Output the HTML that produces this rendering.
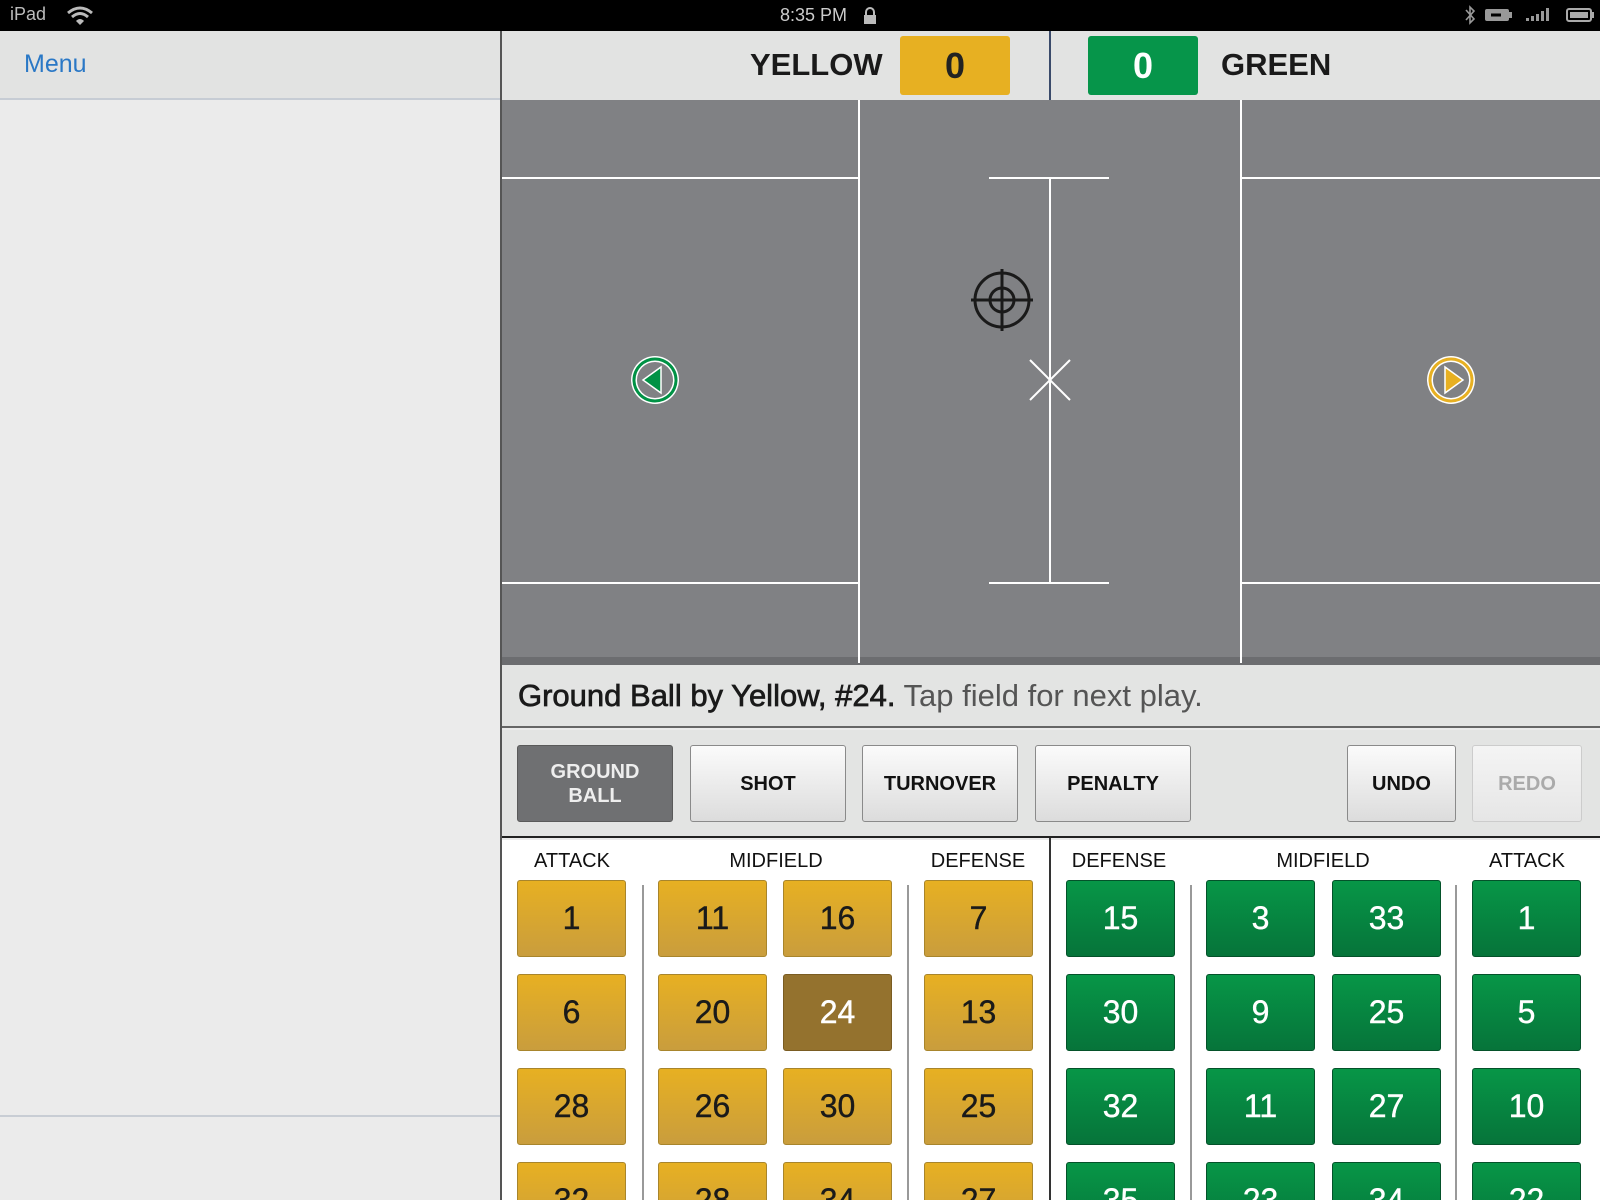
<!DOCTYPE html>
<html style="overflow:hidden;width:1600px;height:1200px"><head><meta charset="utf-8"><style>
*{margin:0;padding:0;box-sizing:border-box}
body{width:1600px;height:1200px;overflow:hidden;background:#ebebeb;font-family:"Liberation Sans",Arial,sans-serif;position:relative}
#w{position:absolute;left:0;top:0;width:1600px;height:1200px;overflow:hidden}
.a{position:absolute}
.sb{left:0;top:0;width:1600px;height:31px;background:#000;color:#bbb;font-size:18px}
.btn{position:absolute;top:745px;height:77px;border:1px solid #8a8a8a;border-radius:3px;background:linear-gradient(#fbfbfb,#dcdcdc);display:flex;align-items:center;justify-content:center;text-align:center;font-weight:bold;font-size:20px;color:#111;line-height:24px}
.n{position:absolute;width:109px;height:77px;border-radius:3px;display:flex;align-items:center;justify-content:center;font-size:32px;-webkit-text-stroke:0.4px}
.y{background:linear-gradient(#e7b022,#c99d3d);border:1px solid #a8852c;color:#1a1a1a}
.g{background:linear-gradient(#079647,#06743a);border:1px solid #04522a;color:#fff}
.s{background:#94722e;border:1px solid #7a5c22;color:#fff}
.h{position:absolute;top:850px;font-size:20px;color:#111;transform:translateX(-50%);white-space:nowrap}
.vl{position:absolute;top:885px;width:2px;height:315px;background:#999}
</style></head><body><div id="w">
<div class="a sb">
<span class="a" style="left:10px;top:4px">iPad</span>
<svg class="a" style="left:66px;top:6px" width="28" height="20" viewBox="0 0 28 20"><path d="M2 7 Q14 -3 26 7" stroke="#bbb" stroke-width="3" fill="none"/><path d="M6 11 Q14 4 22 11" stroke="#bbb" stroke-width="3" fill="none"/><path d="M10 15 Q14 11 18 15 L14 19Z" fill="#bbb"/></svg>
<span class="a" style="left:780px;top:5px;color:#ccc">8:35 PM</span>
<svg class="a" style="left:863px;top:7px" width="14" height="18"><path d="M3 8 V5 a4 4 0 0 1 8 0 V8" stroke="#bbb" stroke-width="2" fill="none"/><rect x="1" y="8" width="12" height="9" fill="#bbb"/></svg>
<svg class="a" style="left:1463px;top:5px" width="14" height="20"><path d="M3 5 L11 14 L7 18 V2 L11 6 L3 15" stroke="#999" stroke-width="1.6" fill="none"/></svg>
<svg class="a" style="left:1484px;top:8px" width="30" height="15"><rect x="1" y="1" width="24" height="12" rx="2" fill="#999"/><rect x="25" y="4" width="3" height="6" fill="#999"/><path d="M7 7 h10" stroke="#000" stroke-width="3"/></svg>
<svg class="a" style="left:1526px;top:8px" width="28" height="14"><rect x="0" y="10" width="3" height="3" fill="#999"/><rect x="5" y="8" width="3" height="5" fill="#999"/><rect x="10" y="6" width="3" height="7" fill="#999"/><rect x="15" y="3" width="3" height="10" fill="#999"/><rect x="20" y="0" width="3" height="13" fill="#999"/></svg>
<svg class="a" style="left:1566px;top:8px" width="30" height="15"><rect x="1" y="1" width="24" height="12" rx="2" fill="none" stroke="#aaa" stroke-width="2"/><rect x="4" y="4" width="18" height="6" fill="#aaa"/><rect x="26" y="4" width="2" height="6" fill="#aaa"/></svg>
</div>
<div class="a" style="left:0;top:31px;width:500px;height:69px;background:#e2e3e2;border-bottom:2px solid #c6ccd4"></div>
<span class="a" style="left:24px;top:50px;font-size:25px;color:#2a78c6">Menu</span>
<div class="a" style="left:0;top:1115px;width:500px;height:2px;background:#c8cdd4"></div>
<div class="a" style="left:500px;top:31px;width:2px;height:1169px;background:#555"></div>
<div class="a" style="left:502px;top:31px;width:1098px;height:69px;background:#e2e3e2"></div>
<span class="a" style="left:750px;top:47px;font-size:31px;font-weight:bold;color:#1a1a1a">YELLOW</span>
<div class="a" style="left:900px;top:36px;width:110px;height:59px;background:#e7b022;border-radius:3px;font-size:36px;font-weight:bold;color:#222;text-align:center;line-height:59px">0</div>
<div class="a" style="left:1049px;top:31px;width:2px;height:69px;background:#3a4a6a"></div>
<div class="a" style="left:1088px;top:36px;width:110px;height:59px;background:#06954a;border-radius:3px;font-size:36px;font-weight:bold;color:#fff;text-align:center;line-height:59px">0</div>
<span class="a" style="left:1221px;top:47px;font-size:31px;font-weight:bold;color:#1a1a1a">GREEN</span>
<svg class="a" style="left:502px;top:100px" width="1098" height="565" viewBox="502 100 1098 565">
<rect x="502" y="100" width="1098" height="565" fill="#808184"/>
<rect x="502" y="657" width="1098" height="8" fill="#6c6d70"/>
<g stroke="#fff" stroke-width="2" fill="none">
<line x1="859" y1="100" x2="859" y2="663"/><line x1="1241" y1="100" x2="1241" y2="663"/>
<line x1="502" y1="178" x2="858" y2="178"/><line x1="502" y1="583" x2="858" y2="583"/>
<line x1="1241" y1="178" x2="1600" y2="178"/><line x1="1241" y1="583" x2="1600" y2="583"/>
<line x1="1050" y1="178" x2="1050" y2="583"/><line x1="989" y1="178" x2="1109" y2="178"/><line x1="989" y1="583" x2="1109" y2="583"/>
<line x1="1030" y1="360" x2="1070" y2="400"/><line x1="1070" y1="360" x2="1030" y2="400"/>
</g>
<g stroke="#1a1a1a" stroke-width="3" fill="none"><circle cx="1002" cy="300" r="27"/><circle cx="1002" cy="300" r="12"/><line x1="971" y1="300" x2="1033" y2="300"/><line x1="1002" y1="269" x2="1002" y2="331"/></g>
<circle cx="655" cy="380" r="24" fill="#fff"/><circle cx="655" cy="380" r="22.5" fill="#009245"/><circle cx="655" cy="380" r="19.5" fill="#fff"/><circle cx="655" cy="380" r="18" fill="#808184"/>
<path d="M643 380 L661 367 L661 393Z" fill="#009245" stroke="#fff" stroke-width="1.5"/>
<circle cx="1451" cy="380" r="24" fill="#fff"/><circle cx="1451" cy="380" r="22.5" fill="#e7b022"/><circle cx="1451" cy="380" r="19.5" fill="#fff"/><circle cx="1451" cy="380" r="18" fill="#808184"/>
<path d="M1463 380 L1445 367 L1445 393Z" fill="#e7b022" stroke="#fff" stroke-width="1.5"/>
</svg>
<div class="a" style="left:502px;top:665px;width:1098px;height:63px;background:#e3e4e3;border-bottom:2px solid #666"></div>
<div class="a" style="left:518px;top:678px;font-size:31px;color:#1a1a1a;white-space:nowrap"><span style="-webkit-text-stroke:0.7px #1a1a1a">Ground Ball by Yellow, #24.</span> <span style="color:#555">Tap field for next play.</span></div>
<div class="a" style="left:502px;top:730px;width:1098px;height:108px;background:#e3e4e3;border-bottom:2px solid #222"></div>
<div class="btn" style="left:517px;width:156px;background:#6f7072;border-color:#5a5a5a;color:#eee">GROUND<br>BALL</div>
<div class="btn" style="left:690px;width:156px">SHOT</div>
<div class="btn" style="left:862px;width:156px">TURNOVER</div>
<div class="btn" style="left:1035px;width:156px">PENALTY</div>
<div class="btn" style="left:1347px;width:109px">UNDO</div>
<div class="btn" style="left:1472px;width:110px;color:#aaa;border-color:#ccc;background:linear-gradient(#f4f4f4,#e6e6e6)">REDO</div>
<div class="a" style="left:502px;top:840px;width:1098px;height:360px;background:#fff"></div>
<div class="a" style="left:1049px;top:838px;width:2px;height:362px;background:#333"></div>
<div class="vl" style="left:642px"></div><div class="vl" style="left:907px"></div>
<div class="vl" style="left:1190px"></div><div class="vl" style="left:1455px"></div>
<div class="h" style="left:572px">ATTACK</div><div class="h" style="left:776px">MIDFIELD</div><div class="h" style="left:978px">DEFENSE</div>
<div class="h" style="left:1119px">DEFENSE</div><div class="h" style="left:1323px">MIDFIELD</div><div class="h" style="left:1527px">ATTACK</div>

<div class="n y" style="left:517px;top:880px">1</div><div class="n y" style="left:658px;top:880px">11</div><div class="n y" style="left:783px;top:880px">16</div><div class="n y" style="left:924px;top:880px">7</div>
<div class="n y" style="left:517px;top:974px">6</div><div class="n y" style="left:658px;top:974px">20</div><div class="n s" style="left:783px;top:974px">24</div><div class="n y" style="left:924px;top:974px">13</div>
<div class="n y" style="left:517px;top:1068px">28</div><div class="n y" style="left:658px;top:1068px">26</div><div class="n y" style="left:783px;top:1068px">30</div><div class="n y" style="left:924px;top:1068px">25</div>
<div class="n y" style="left:517px;top:1162px">32</div><div class="n y" style="left:658px;top:1162px">28</div><div class="n y" style="left:783px;top:1162px">34</div><div class="n y" style="left:924px;top:1162px">27</div>

<div class="n g" style="left:1066px;top:880px">15</div><div class="n g" style="left:1206px;top:880px">3</div><div class="n g" style="left:1332px;top:880px">33</div><div class="n g" style="left:1472px;top:880px">1</div>
<div class="n g" style="left:1066px;top:974px">30</div><div class="n g" style="left:1206px;top:974px">9</div><div class="n g" style="left:1332px;top:974px">25</div><div class="n g" style="left:1472px;top:974px">5</div>
<div class="n g" style="left:1066px;top:1068px">32</div><div class="n g" style="left:1206px;top:1068px">11</div><div class="n g" style="left:1332px;top:1068px">27</div><div class="n g" style="left:1472px;top:1068px">10</div>
<div class="n g" style="left:1066px;top:1162px">35</div><div class="n g" style="left:1206px;top:1162px">23</div><div class="n g" style="left:1332px;top:1162px">34</div><div class="n g" style="left:1472px;top:1162px">22</div>
</div></body></html>
